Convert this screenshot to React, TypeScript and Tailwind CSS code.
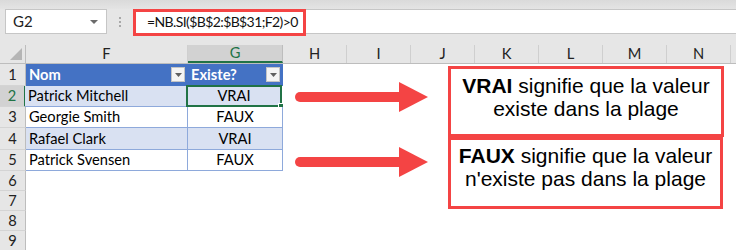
import React from 'react';

const data: [string, string][] = [
  ['Patrick Mitchell', 'VRAI'],
  ['Georgie Smith', 'FAUX'],
  ['Rafael Clark', 'VRAI'],
  ['Patrick Svensen', 'FAUX'],
];
const rowH = ['h-[22px]', 'h-[21px]', 'h-[21px]', 'h-[22px]', 'h-[21px]'];
const cols = ['H', 'I', 'J', 'K', 'L', 'M', 'N'];

function FilterBtn() {
  return (
    <div className="absolute right-[3px] top-[3px] w-[14px] h-[15px] bg-[#f4f4f4] border border-[#c4c4c4] flex items-center justify-center">
      <svg width="7" height="4" viewBox="0 0 7 4">
        <path d="M0 0h7L3.5 4z" fill="#606060" />
      </svg>
    </div>
  );
}

function Arrow() {
  return (
    <svg width="134" height="30" viewBox="0 0 134 30">
      <line x1="5" y1="15" x2="106" y2="15" stroke="#f44444" strokeWidth="10" strokeLinecap="round" />
      <path d="M104 0 L133 15 L104 30 Z" fill="#f44444" />
    </svg>
  );
}

export default function App() {
  const cell = "font-['Lato',sans-serif] text-[14.67px] text-black";
  return (
    <div className={`relative w-[736px] h-[250px] overflow-hidden bg-white ${cell}`}>
      {/* toolbar */}
      <div className="h-[45px] bg-[#e6e6e6] flex flex-col">
        <div className="h-[9px] bg-gradient-to-b from-[#dadada] to-[#e4e4e4]" />
        <div className="flex h-[25px] items-stretch">
          <div className="ml-[5px] w-[102px] bg-white border border-[#c6c6c6] flex items-center justify-between pl-[7px] pr-[8px]">
            <span className="text-[15px] text-[#222]">G2</span>
            <svg width="8" height="4" viewBox="0 0 8 4">
              <path d="M0 0h8L4 4z" fill="#6b6b6b" />
            </svg>
          </div>
          <div className="w-[26px] flex flex-col items-center justify-center gap-[2px]">
            <div className="w-[2px] h-[2px] bg-[#a8a8a8]" />
            <div className="w-[2px] h-[2px] bg-[#a8a8a8]" />
            <div className="w-[2px] h-[2px] bg-[#a8a8a8]" />
          </div>
          <div className="flex-1 bg-white border-y border-[#c6c6c6] flex items-center pl-[14px]">
            <span className="text-[14px] tracking-[-0.6px] text-[#111]">=NB.SI($B$2:$B$31;F2)&gt;0</span>
          </div>
        </div>
      </div>

      {/* column headers */}
      <div className="flex h-[19px] bg-[#e6e6e6] border-b border-[#bdbdbd] text-[14.67px]">
        <div className="w-[26px] border-r border-[#bdbdbd] relative">
          <svg className="absolute left-[10px] top-[3px]" width="12" height="12" viewBox="0 0 12 12">
            <path d="M12 0V12H0Z" fill="#b5b5b5" />
          </svg>
        </div>
        <div className="w-[162px] border-r border-[#cfcfcf] flex items-center justify-center text-[#222]">F</div>
        <div className="w-[95px] bg-[#d2d2d2] border-b-2 border-[#217346] border-r border-r-[#bdbdbd] flex items-center justify-center text-[#217346]">G</div>
        {cols.map((c) => (
          <div key={c} className="w-[64px] border-r border-[#cfcfcf] flex items-center justify-center text-[#222]">{c}</div>
        ))}
        <div className="flex-1" />
      </div>

      {/* row 1 header */}
      <div className={`flex ${rowH[0]}`}>
        <div className="w-[26px] bg-[#e6e6e6] border-r border-[#bdbdbd] border-b border-b-[#d4d4d4] flex items-center justify-center text-[#222]">1</div>
        <div className="w-[162px] bg-[#4472c4] relative flex items-center pl-[3px] text-white font-bold">
          Nom
          <FilterBtn />
        </div>
        <div className="w-[95px] bg-[#4472c4] relative flex items-center pl-[3px] text-white font-bold">
          Existe?
          <FilterBtn />
        </div>
        <div className="flex-1" />
      </div>

      {data.map(([name, val], i) => {
        const band = i % 2 === 0 ? 'bg-[#d9e1f2]' : 'bg-white';
        const selected = i === 0;
        return (
          <div key={name} className={`flex ${rowH[i + 1]}`}>
            <div
              className={`w-[26px] border-b border-b-[#d4d4d4] flex items-center justify-center ${
                selected
                  ? 'bg-[#d2d2d2] border-r-2 border-r-[#217346] text-[#217346]'
                  : 'bg-[#e6e6e6] border-r border-r-[#bdbdbd] text-[#222]'
              }`}
            >
              {i + 2}
            </div>
            <div className={`w-[162px] ${band} border-b border-r border-[#8ea9db] flex items-center pl-[3px] ${selected ? '-ml-px' : ''}`}>{name}</div>
            <div className={`w-[95px] ${band} border-b border-r border-[#8ea9db] flex items-center justify-center relative`}>
              {val}
              {selected && (
                <div className="absolute -left-px -top-px -right-px -bottom-px border-2 border-[#217346]">
                  <div className="absolute -right-[4px] -bottom-[4px] w-[6px] h-[6px] bg-[#217346] border border-white" />
                </div>
              )}
            </div>
            <div className="flex-1" />
          </div>
        );
      })}

      {[6, 7, 8, 9].map((n) => (
        <div key={n} className="flex h-[20px]">
          <div className="w-[26px] bg-[#e6e6e6] border-r border-[#bdbdbd] border-b border-b-[#d4d4d4] flex items-center justify-center text-[#222]">{n}</div>
          <div className="flex-1" />
        </div>
      ))}

      {/* red highlight around formula */}
      <div className="absolute left-[133px] top-[9px] w-[173px] h-[27px] border-[3px] border-[#f44444]" />

      {/* arrows */}
      <div className="absolute left-[295px] top-[82px]">
        <Arrow />
      </div>
      <div className="absolute left-[295px] top-[147px]">
        <Arrow />
      </div>

      {/* callouts */}
      <div className="absolute left-[448px] top-[66px] w-[276px] h-[71px] bg-white border-[3px] border-[#f44444] pt-[5px] text-center font-['Liberation_Sans',Arial,sans-serif] text-[21px] leading-[23px] text-black">
        <b>VRAI</b> signifie que la valeur
        <br />
        existe dans la plage
      </div>
      <div className="absolute left-[448px] top-[137px] w-[275px] h-[72px] bg-white border-[3px] border-[#f44444] pt-[4px] text-center font-['Liberation_Sans',Arial,sans-serif] text-[21px] leading-[23px] text-black">
        <b>FAUX</b> signifie que la valeur
        <br />
        n'existe pas dans la plage
      </div>
    </div>
  );
}
